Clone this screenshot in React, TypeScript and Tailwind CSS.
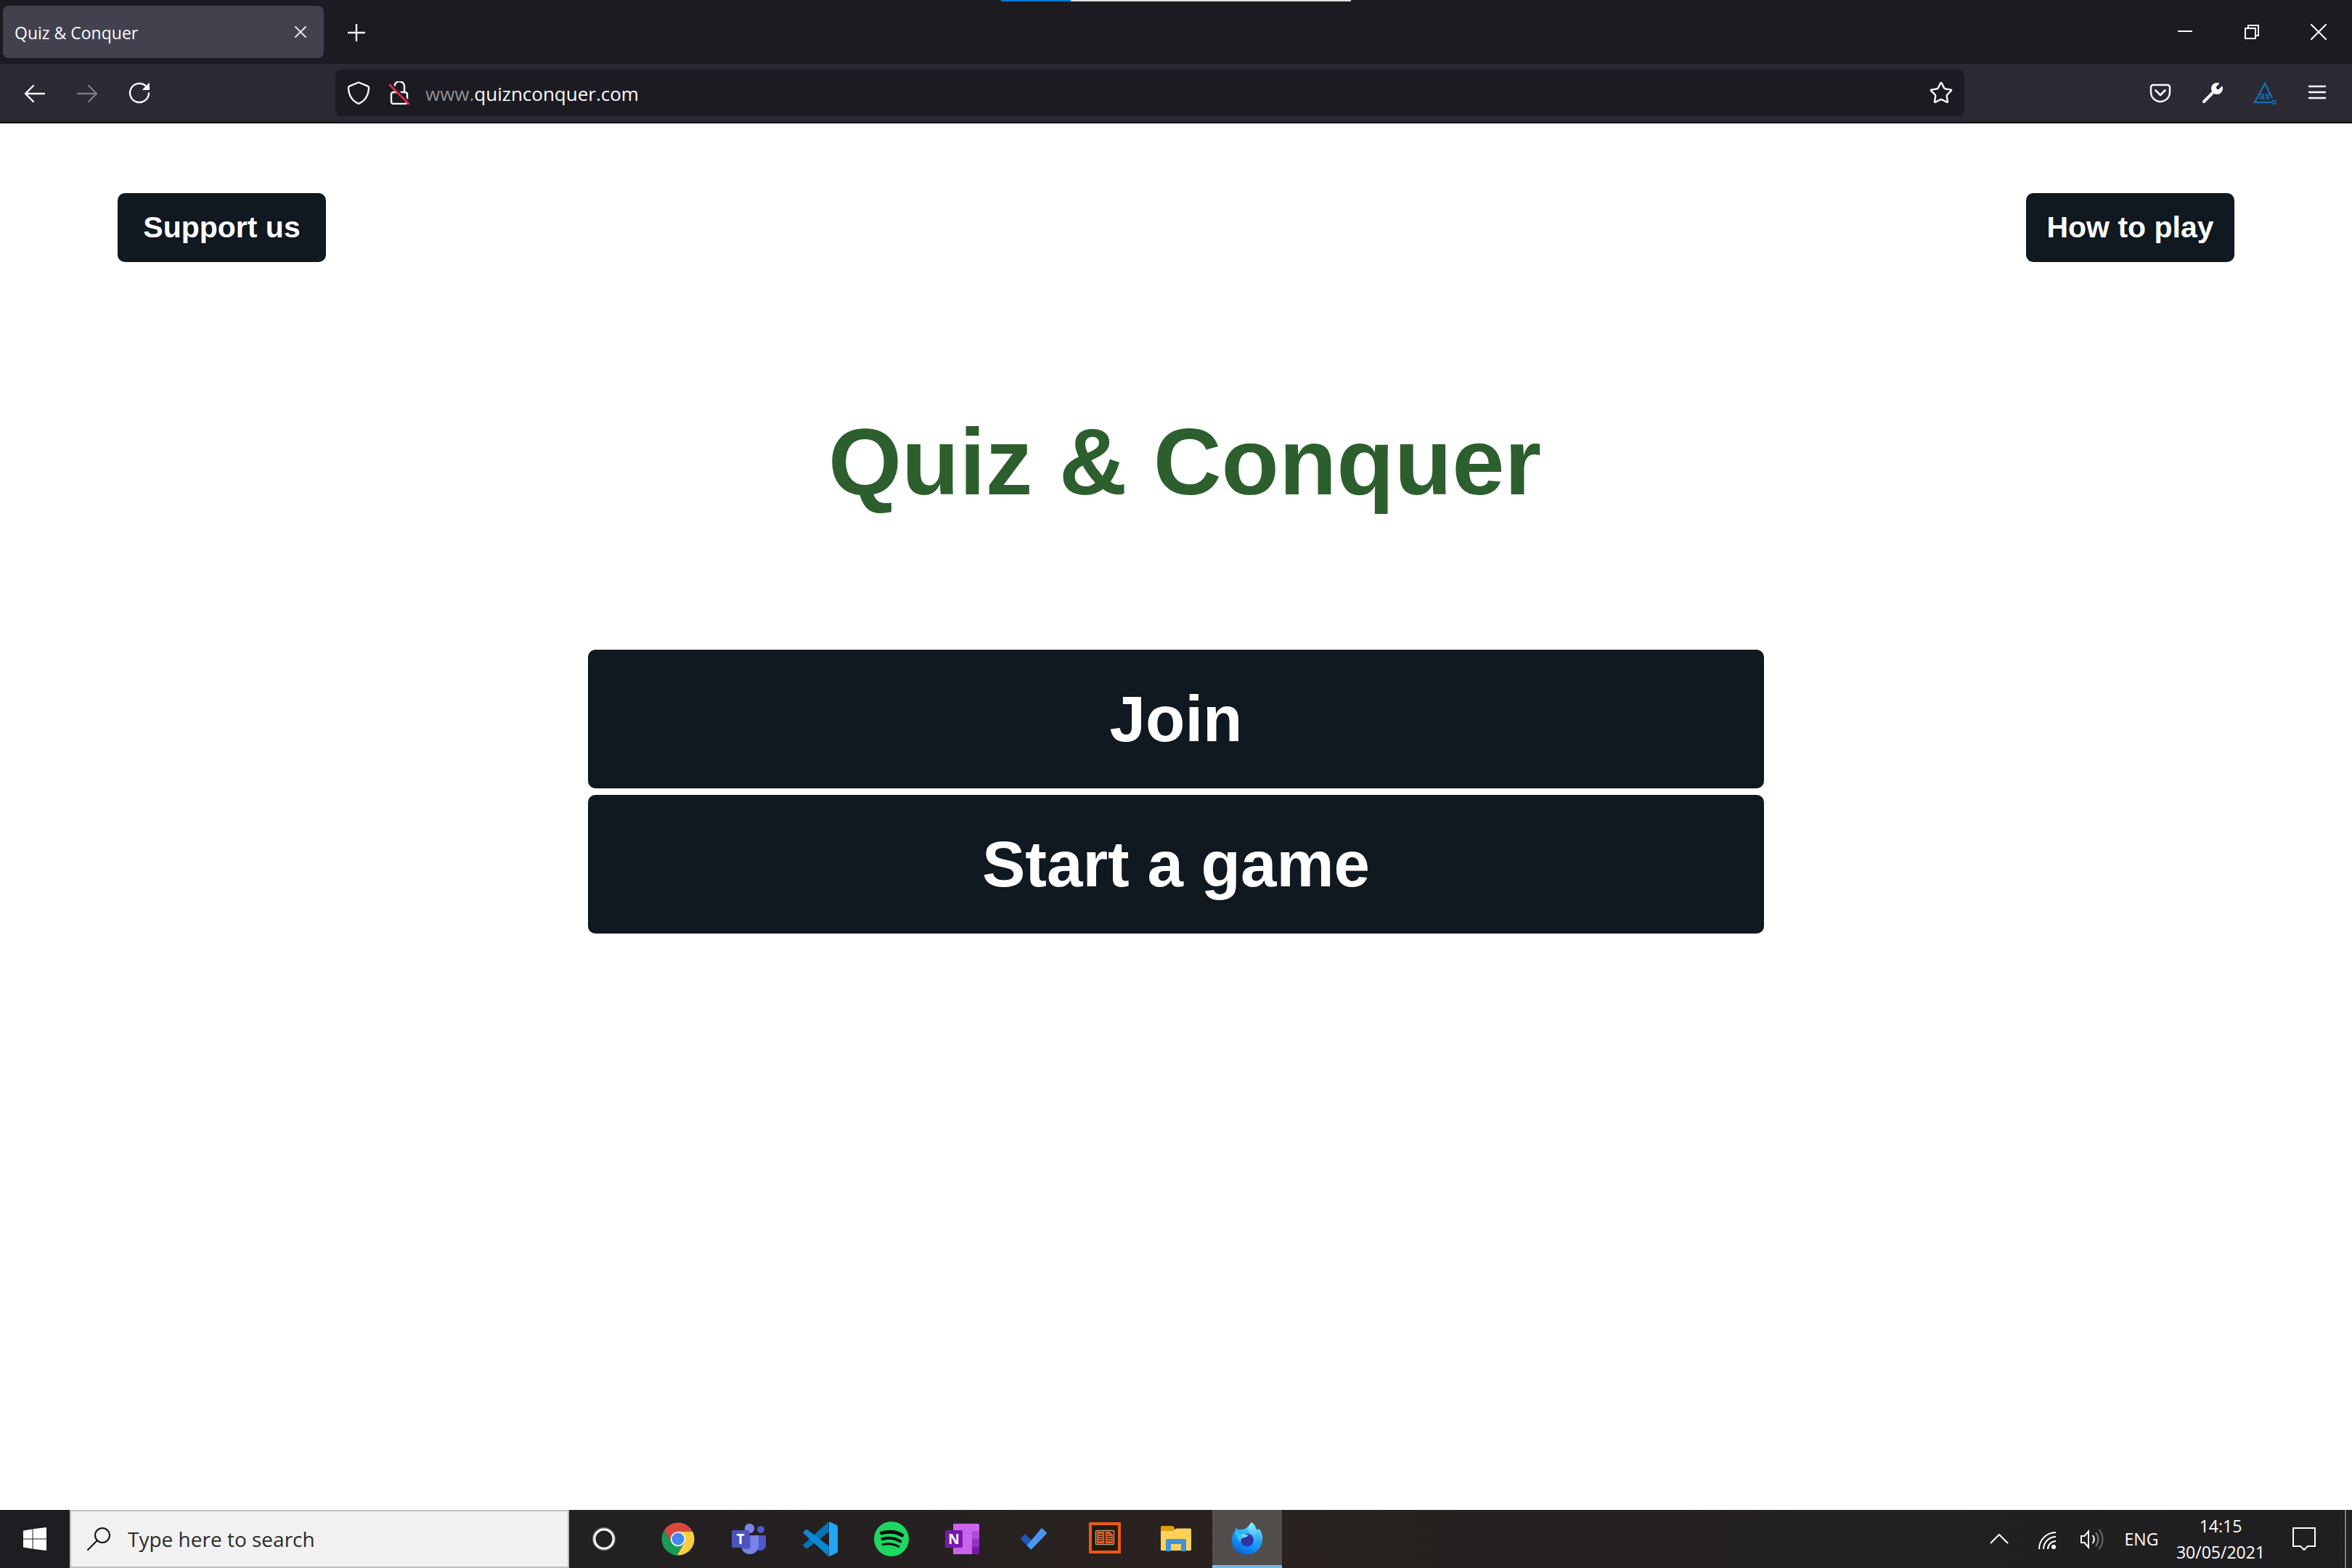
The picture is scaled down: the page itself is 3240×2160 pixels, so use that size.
import React from "react";
import { Star } from "lucide-react";

const uiFont = "font-['Open_Sans','Noto_Sans',sans-serif]";

type IconProps = { size?: number; box?: number; children: React.ReactNode };

function Icon({ size = 32, box, children }: IconProps) {
  const view = box ?? size;
  return (
    <svg
      width={size}
      height={size}
      viewBox={`0 0 ${view} ${view}`}
      fill="none"
      stroke="none"
      strokeLinecap="round"
      strokeLinejoin="round"
      aria-hidden="true"
    >
      {children}
    </svg>
  );
}

function ToolButton({ label, className, children }: { label: string; className: string; children: React.ReactNode }) {
  return (
    <button type="button" aria-label={label} className={`flex shrink-0 items-center justify-center ${className}`}>
      {children}
    </button>
  );
}

function TitleBar() {
  return (
    <div className="relative flex h-22 items-center bg-[#1c1b22] pl-1 text-[#fbfbfe]">
      <div className="absolute inset-x-0 top-0 flex justify-center">
        <div className="h-0.5 w-24 bg-[#0078d7]" />
        <div className="h-0.5 w-[386px] bg-[#e1e1e1]" />
      </div>
      <div className="flex h-18 w-[442px] items-center justify-between rounded-lg bg-[#42414d] pl-4">
        <span className="pt-0.5 text-[23px] leading-8">Quiz &amp; Conquer</span>
        <ToolButton label="Close tab" className="h-16 w-16">
          <Icon size={16}>
            <path d="M1 1L15 15M15 1L1 15" stroke="#e4e4ea" strokeWidth="2" />
          </Icon>
        </ToolButton>
      </div>
      <ToolButton label="Open a new tab" className="h-18 w-[90px] pt-0.5">
        <Icon size={24}>
          <path d="M12 1V23M1 12H23" stroke="#fbfbfe" strokeWidth="2.4" />
        </Icon>
      </ToolButton>
      <div className="ml-auto flex">
        <ToolButton label="Minimize" className="h-22 w-[92px]">
          <svg width="20" height="20" viewBox="0 0 20 20" aria-hidden="true">
            <path d="M0 9H20" stroke="#fff" strokeWidth="2" />
          </svg>
        </ToolButton>
        <ToolButton label="Restore" className="h-22 w-[92px]">
          <svg width="20" height="20" viewBox="0 0 20 20" fill="none" stroke="#fff" strokeWidth="2" aria-hidden="true">
            <path d="M1 5H15V19H1ZM5 5V1H19V15H15" />
          </svg>
        </ToolButton>
        <ToolButton label="Close" className="h-22 w-[92px]">
          <Icon size={22}>
            <path d="M1 1L21 21M21 1L1 21" stroke="#fff" strokeWidth="2" />
          </Icon>
        </ToolButton>
      </div>
    </div>
  );
}

function AddressBar() {
  return (
    <div className="flex h-16 min-w-0 flex-1 items-center rounded-lg bg-[#1c1b22]">
      <ToolButton label="Tracking protection" className="h-16 w-16">
        <Icon>
          <path
            d="M16 1.5L28.6 6.6Q30.2 7.4 30 9.5C29.4 20 24 27.5 16 30.8C8 27.5 2.6 20 2 9.5Q1.8 7.4 3.4 6.6Z"
            stroke="#fbfbfe"
            strokeWidth="2.4"
          />
        </Icon>
      </ToolButton>
      <ToolButton label="Connection not secure" className="h-16 w-12">
        <Icon>
          <rect x="5" y="15" width="22" height="16" rx="3" stroke="#fbfbfe" strokeWidth="2.4" />
          <path d="M9.5 6A6.5 6.5 0 0 1 23 8V15" stroke="#fbfbfe" strokeWidth="2.4" />
          <path d="M5 4L31 30" stroke="#1c1b22" strokeWidth="3" strokeLinecap="butt" />
          <path d="M3 5L29 31" stroke="#e22850" strokeWidth="2.8" />
        </Icon>
      </ToolButton>
      <label htmlFor="address" className="ml-3 pt-0.5 text-[26px] leading-9 text-[#8f8f94]">
        www.
      </label>
      <input
        id="address"
        type="text"
        defaultValue="quiznconquer.com"
        className="min-w-0 flex-1 bg-transparent pt-0.5 text-[26px] leading-9 text-[#fbfbfe] outline-none"
      />
      <ToolButton label="Bookmark this page" className="h-16 w-16">
        <Star size={34} strokeWidth={1.7} color="#fbfbfe" />
      </ToolButton>
    </div>
  );
}

function NavBar() {
  return (
    <div className="flex items-center border-b-2 border-[#0c0c0d] bg-[#2b2a33] px-3 py-2">
      <ToolButton label="Back" className="h-16 w-18">
        <Icon>
          <path d="M29 17H3.5M14 6L3 17L14 28" stroke="#fbfbfe" strokeWidth="2.4" />
        </Icon>
      </ToolButton>
      <ToolButton label="Forward" className="h-16 w-18">
        <Icon>
          <path d="M3 17H28.5M18 6L29 17L18 28" stroke="#7c7b82" strokeWidth="2.4" />
        </Icon>
      </ToolButton>
      <ToolButton label="Reload" className="h-16 w-18">
        <Icon>
          <path d="M29 16.5A13 13 0 1 1 25 6.6" stroke="#fbfbfe" strokeWidth="2.4" />
          <path d="M29.4 3V11.5H21Z" fill="#fbfbfe" stroke="#fbfbfe" strokeWidth="1.2" />
        </Icon>
      </ToolButton>
      <div className="w-[234px] shrink-0" />
      <AddressBar />
      <div className="w-[234px] shrink-0" />
      <ToolButton label="Save to Pocket" className="h-16 w-18">
        <Icon>
          <path
            d="M6 5H26A3 3 0 0 1 29 8V15A13 13 0 0 1 3 15V8A3 3 0 0 1 6 5Z"
            stroke="#fbfbfe"
            strokeWidth="2.4"
          />
          <path d="M9.5 12.5L16 19L22.5 12.5" stroke="#fbfbfe" strokeWidth="2.6" />
        </Icon>
      </ToolButton>
      <ToolButton label="Developer tools" className="h-16 w-18">
        <Icon>
          <path d="M4 28L18 14" stroke="#fbfbfe" strokeWidth="4" />
          <circle cx="22" cy="10" r="8" fill="#fbfbfe" />
          <path d="M23.5 8.5L31 1" stroke="#2b2a33" strokeWidth="5" />
        </Icon>
      </ToolButton>
      <ToolButton label="axe DevTools" className="h-16 w-18">
        <Icon>
          <path d="M26 23L16 3L2 29H26" stroke="#0f72b8" strokeWidth="2.2" strokeLinejoin="miter" strokeLinecap="butt" />
          <circle cx="28.5" cy="28.7" r="2.4" stroke="#0f72b8" strokeWidth="1.6" />
          <text x="8.5" y="25" fontSize="13" fontWeight="600" fontFamily="Inter, sans-serif" fill="#0f72b8">
            ax
          </text>
        </Icon>
      </ToolButton>
      <ToolButton label="Open application menu" className="h-16 w-18">
        <Icon>
          <path d="M5 7H27M5 15H27M5 23H27" stroke="#fbfbfe" strokeWidth="2.4" />
        </Icon>
      </ToolButton>
    </div>
  );
}

function Page() {
  const dark = "rounded-[10px] bg-[#101820] text-center font-bold text-white";
  return (
    <main className="flex-1 bg-white font-['Liberation_Sans',Arial,sans-serif]">
      <nav className="flex justify-between px-[5%] pt-24">
        <button type="button" className={`w-[287px] py-6 text-[41px] leading-[47px] ${dark}`}>
          Support us
        </button>
        <button type="button" className={`w-[287px] py-6 text-[41px] leading-[47px] ${dark}`}>
          How to play
        </button>
      </nav>
      <h1 className="mt-[210px] pl-6 text-center text-[130px] leading-none font-bold text-[#2c5f2d]">
        Quiz &amp; Conquer
      </h1>
      <div className="mx-auto mt-[194px] flex w-1/2 flex-col gap-[9px]">
        <button type="button" className={`py-12 text-[89px] leading-[95px] ${dark}`}>
          Join
        </button>
        <button type="button" className={`py-12 text-[89px] leading-[95px] ${dark}`}>
          Start a game
        </button>
      </div>
    </main>
  );
}

function ChromeLogo() {
  return (
    <Icon size={48}>
      <path d="M44.05 13.8H24L15.17 29.1L5.14 11.74A22.5 22.5 0 0 1 44.05 13.8Z" fill="#d9483b" />
      <path d="M5.14 11.74L15.17 29.1H32.83L22.81 46.46A22.5 22.5 0 0 1 5.14 11.74Z" fill="#1a9b57" />
      <path d="M22.81 46.46L32.83 29.1L24 13.8H44.05A22.5 22.5 0 0 1 22.81 46.46Z" fill="#ffcd41" />
      <circle cx="24" cy="24" r="10.3" fill="#f1f1f1" />
      <circle cx="24" cy="24" r="8.4" fill="#4587f3" />
    </Icon>
  );
}

function TeamsLogo() {
  return (
    <Icon size={48}>
      <circle cx="40" cy="11" r="5" fill="#5059c9" />
      <circle cx="24.5" cy="9.5" r="6.7" fill="#7b83eb" />
      <path d="M32 19H46Q47 19 47 20V31A7 7 0 0 1 32 34Z" fill="#5059c9" />
      <path d="M13 19H36Q37 19 37 20V33A12 12 0 0 1 13 33Z" fill="#7b83eb" />
      <path d="M14 19H26V35Q26 38 23 38H14Z" fill="#5a62c8" />
      <rect x="0" y="12" width="24" height="24" rx="2" fill="#4b53bc" />
      <text x="12" y="31" textAnchor="middle" fontSize="19" fontWeight="700" fontFamily="'Open Sans', sans-serif" fill="#fff">
        T
      </text>
    </Icon>
  );
}

function CodeLogo() {
  return (
    <Icon size={48}>
      <path d="M35 0.5L0.8 31.8Q0 32.8 0.8 33.8L4 36.8Q5.2 37.6 6.5 36.8L36 14Z" fill="#0374b5" />
      <path d="M35 47.5L0.8 16.2Q0 15.2 0.8 14.2L4 11.2Q5.2 10.4 6.5 11.2L36 34Z" fill="#0b87d3" />
      <path d="M36 0L47 5Q48 5.6 48 7V41Q48 42.4 47 43L36 48Q35.5 48 35 47.5L36 46Z" fill="#23a6f3" />
    </Icon>
  );
}

function SpotifyLogo() {
  return (
    <Icon size={48}>
      <circle cx="24" cy="24" r="24" fill="#1ed760" />
      <g stroke="#0b0b0b">
        <path d="M10.5 15.8Q27 11.5 38.6 19" strokeWidth="5" />
        <path d="M11.5 24Q25 20.5 36.3 27.3" strokeWidth="4" />
        <path d="M12.2 31.6Q24 28.8 33.8 34.4" strokeWidth="3" />
      </g>
    </Icon>
  );
}

function OneNoteLogo() {
  return (
    <Icon size={48}>
      <rect x="11" y="3" width="36" height="42" rx="1.5" fill="#ca64ea" />
      <rect x="37" y="13.5" width="10" height="10.5" fill="#ae4bd5" />
      <rect x="37" y="24" width="10" height="10.5" fill="#9332bf" />
      <path d="M37 34.5H47V43.5Q47 45 45.5 45H37Z" fill="#7719aa" />
      <rect x="0" y="12" width="24" height="24" rx="2" fill="#7719aa" />
      <text x="12" y="31" textAnchor="middle" fontSize="19" fontWeight="700" fontFamily="'Open Sans', sans-serif" fill="#fff">
        N
      </text>
    </Icon>
  );
}

function ToDoLogo() {
  return (
    <Icon size={48}>
      <path d="M7 24L12 18.5L21 27.5L16 33Z" fill="#2059b8" stroke="#2059b8" strokeWidth="2" />
      <path d="M16 33L35.2 10.2L41 16L20.3 37.6Z" fill="#4a96f5" stroke="#4a96f5" strokeWidth="2" />
    </Icon>
  );
}

function DigitalEditionsLogo() {
  return (
    <Icon size={48}>
      <rect x="4" y="3" width="40" height="39" fill="#2a1a02" stroke="#e9591b" strokeWidth="4" strokeLinejoin="miter" />
      <rect x="11.5" y="12.5" width="25" height="19" rx="1" stroke="#a8a09a" strokeWidth="1.4" />
      <path d="M13 14H23.2V30H13ZM24.8 14H31L35 18V30H24.8Z" fill="#e9591b" />
      <path
        d="M15 17.5H21.5M15 20.5H21.5M15 23.5H21.5M15 26.5H21.5M26.5 17.5H30M26.5 20.5H33.5M26.5 23.5H33.5M26.5 26.5H33.5"
        stroke="#2a1a02"
        strokeWidth="1"
        strokeLinecap="butt"
      />
    </Icon>
  );
}

function ExplorerLogo() {
  return (
    <Icon size={48}>
      <path d="M3 7.5Q3 6 4.5 6H18.5Q20 6 21 7.5L22 9V14H3Z" fill="#dd9f0b" />
      <path d="M3 13H18Q20 13 21.5 11.5Q23.5 9.5 25.5 9.5H43.5Q45 9.5 45 11V38.5Q45 40 43.5 40H4.5Q3 40 3 38.5Z" fill="#ffd159" />
      <path d="M12 24H36Q38 24 38 26V41H31V31H17V41H10V26Q10 24 12 24Z" fill="#3b95d9" />
    </Icon>
  );
}

function FirefoxLogo() {
  return (
    <Icon size={48}>
      <defs>
        <linearGradient id="fxBody" x1="34" y1="6" x2="16" y2="44" gradientUnits="userSpaceOnUse">
          <stop offset="0" stopColor="#5fe0ff" />
          <stop offset="0.45" stopColor="#1da5fb" />
          <stop offset="1" stopColor="#0668e0" />
        </linearGradient>
        <linearGradient id="fxFlame" x1="30" y1="1" x2="38" y2="34" gradientUnits="userSpaceOnUse">
          <stop offset="0" stopColor="#8ff3ff" />
          <stop offset="1" stopColor="#1390f5" />
        </linearGradient>
      </defs>
      <path
        d="M30 1C34 4 35 7 36 10L39 11.5L40 9.5C44 14 45.5 19 45 25C44 37 35 45.5 24 45.5C12 45.5 3 37 3 26C3 20 5 15 8 12L8.5 8.5L12 11.5C14 10.5 16 10.5 18 11L23 9C25 6 29 4 30 1Z"
        fill="url(#fxBody)"
      />
      <path
        d="M30 1C36 5 35.5 9 38 13L39.5 11C44 17 44 27 38 32.5C36 34.5 33 35 30 34.5C35 29 34 21 29 16C24 12 25 6 30 1Z"
        fill="url(#fxFlame)"
      />
      <circle cx="24" cy="25.5" r="8.8" fill="#33309f" />
      <path d="M8 13C12 16 17 15 24 19C24 21.5 20 22 18 22.5C15 24 15 27 15.5 29C11 26 9 20 8 13Z" fill="#3bbcff" />
      <path d="M16 18.5C21 16.5 24 18 25.5 19C24.5 21.5 20 22 18 22.5Z" fill="#73dcff" />
    </Icon>
  );
}

const apps = [
  { name: "Google Chrome", logo: <ChromeLogo /> },
  { name: "Microsoft Teams", logo: <TeamsLogo /> },
  { name: "Visual Studio Code", logo: <CodeLogo /> },
  { name: "Spotify", logo: <SpotifyLogo /> },
  { name: "OneNote", logo: <OneNoteLogo /> },
  { name: "Microsoft To Do", logo: <ToDoLogo /> },
  { name: "Adobe Digital Editions", logo: <DigitalEditionsLogo /> },
  { name: "File Explorer", logo: <ExplorerLogo /> },
];

function Taskbar() {
  return (
    <footer className="flex h-20 items-center bg-linear-to-r from-[#1c1e22] via-[#292220] to-[#1e1f21] text-white">
      <ToolButton label="Start" className="h-20 w-24">
        <Icon>
          <path d="M0 4.6L12.6 2.4V15.4H0ZM13.6 2.2L32 0V15.4H13.6ZM0 16.4H12.6V29.6L0 27.4ZM13.6 16.4H32V32L13.6 29.8Z" fill="#fff" />
        </Icon>
      </ToolButton>
      <div className="flex h-20 w-[688px] items-center border-2 border-[#bebebe] bg-[#f1f1f1] pl-[22px]">
        <label htmlFor="taskbar-search" aria-label="Search">
          <Icon>
            <circle cx="21" cy="11" r="10" stroke="#111" strokeWidth="2" />
            <path d="M14 18L1 31" stroke="#111" strokeWidth="2" />
          </Icon>
        </label>
        <input
          id="taskbar-search"
          type="text"
          placeholder="Type here to search"
          className="ml-6 min-w-0 flex-1 bg-transparent text-[28px] leading-9 text-[#2b2b2b] outline-none placeholder:text-[#2b2b2b]"
        />
      </div>
      <ToolButton label="Cortana" className="h-20 w-[101px] pr-1.5">
        <Icon>
          <circle cx="16" cy="16" r="14.5" stroke="#7d7a7a" strokeWidth="3" />
          <circle cx="16" cy="16" r="13" stroke="#fff" strokeWidth="3" />
        </Icon>
      </ToolButton>
      {apps.map((app) => (
        <ToolButton key={app.name} label={app.name} className="h-20 w-[98px]">
          {app.logo}
        </ToolButton>
      ))}
      <ToolButton label="Firefox Developer Edition" className="ml-px h-20 w-24 border-b-4 border-[#76b9ed] bg-[#524e4c] pt-1">
        <FirefoxLogo />
      </ToolButton>

      <div className="ml-auto flex items-center">
        <ToolButton label="Show hidden icons" className="h-20 w-15">
          <Icon size={26}>
            <path d="M1 19L13 7L25 19" stroke="#fff" strokeWidth="2" strokeLinecap="butt" strokeLinejoin="miter" />
          </Icon>
        </ToolButton>
        <ToolButton label="Network" className="h-20 w-18">
          <svg width="24" height="28" viewBox="0 0 24 28" fill="none" stroke="#fff" strokeWidth="2" aria-hidden="true">
            <path d="M1 28A23 23 0 0 1 24 5M7 28A17 17 0 0 1 24 11M13 28A11 11 0 0 1 24 17" />
            <circle cx="21" cy="25" r="3" fill="#fff" stroke="none" />
          </svg>
        </ToolButton>
        <ToolButton label="Volume" className="h-20 w-13">
          <Icon>
            <path d="M1 12H5.5L11 5.5V27.5L5.5 21H1Z" stroke="#fff" strokeWidth="2" strokeLinejoin="miter" />
            <path d="M17 11.5Q20.5 16.5 17 21.5" stroke="#fff" strokeWidth="2" />
            <path d="M21.5 7.5Q27.5 16.5 21.5 25.5" stroke="#7d7c7c" strokeWidth="2" />
            <path d="M26 3.5Q35 16.5 26 29.5" stroke="#6a6969" strokeWidth="2" />
          </Icon>
        </ToolButton>
        <button type="button" className="h-20 w-21 text-[23px] leading-8">
          ENG
        </button>
        <button type="button" className="flex h-20 w-[134px] flex-col items-center justify-center text-[23px] leading-9">
          <span>14:15</span>
          <span>30/05/2021</span>
        </button>
        <ToolButton label="Notifications" className="mr-2 h-20 w-24">
          <Icon>
            <path d="M1 1H31V26H21L16 31L11 26H1Z" stroke="#fff" strokeWidth="2" strokeLinejoin="miter" />
          </Icon>
        </ToolButton>
        <button type="button" aria-label="Show desktop" className="h-20 w-2.5 border-l-2 border-[#7b7b7c]" />
      </div>
    </footer>
  );
}

export default function App() {
  return (
    <div className={`flex min-h-screen flex-col bg-white ${uiFont}`}>
      <header className="text-[#fbfbfe]">
        <TitleBar />
        <NavBar />
      </header>
      <Page />
      <Taskbar />
    </div>
  );
}
